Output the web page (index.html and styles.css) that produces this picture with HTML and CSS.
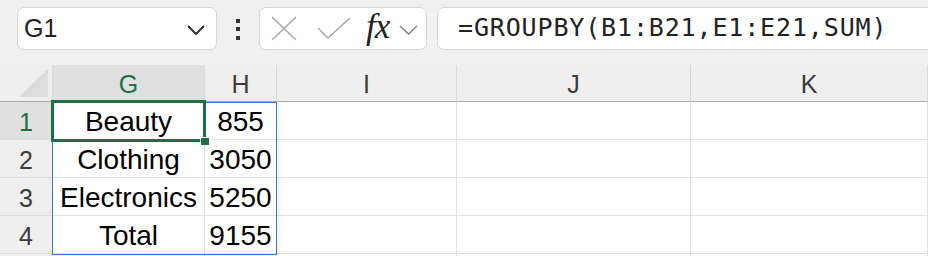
FILE: index.html
```html
<!doctype html>
<html>
<head>
<meta charset="utf-8">
<title>GROUPBY</title>
<link rel="stylesheet" href="styles.css">
</head>
<body>
	<div class="bar">
		<div class="namebox">
			<span class="ref">G1</span>
			<svg class="chev" width="18" height="10" viewBox="0 0 18 10"><polyline points="1,1 9,9 17,1" fill="none" stroke="#333" stroke-width="2"/></svg>
		</div>
		<div class="dots"><i></i><i></i><i></i></div>
		<div class="fxbox">
			<svg width="26" height="25" viewBox="0 0 26 25"><path d="M1 1 L25 24 M25 1 L1 24" stroke="#aaa" stroke-width="1.6" fill="none"/></svg>
			<svg width="34" height="23" viewBox="0 0 34 23"><polyline points="1,11 11,21 33,1" stroke="#aaa" stroke-width="1.6" fill="none"/></svg>
			<span class="fx">fx</span>
			<svg width="19" height="10" viewBox="0 0 19 10"><polyline points="1,1 9.5,9 18,1" stroke="#888" stroke-width="1.6" fill="none"/></svg>
		</div>
		<div class="formula">=GROUPBY(B1:B21,E1:E21,SUM)</div>
	</div>

	<div class="stack">
		<div class="sheet">
			<div class="corner"><span class="tri"></span></div>
			<div class="colhead on">G</div>
			<div class="colhead">H</div>
			<div class="colhead">I</div>
			<div class="colhead">J</div>
			<div class="colhead">K</div>

			<div class="rowhead on">1</div>
			<div class="cell">Beauty</div>
			<div class="cell">855</div>
			<div class="cell"></div>
			<div class="cell"></div>
			<div class="cell"></div>

			<div class="rowhead">2</div>
			<div class="cell">Clothing</div>
			<div class="cell">3050</div>
			<div class="cell"></div>
			<div class="cell"></div>
			<div class="cell"></div>

			<div class="rowhead">3</div>
			<div class="cell">Electronics</div>
			<div class="cell">5250</div>
			<div class="cell"></div>
			<div class="cell"></div>
			<div class="cell"></div>

			<div class="rowhead">4</div>
			<div class="cell">Total</div>
			<div class="cell">9155</div>
			<div class="cell"></div>
			<div class="cell"></div>
			<div class="cell"></div>

			<div class="rowhead"></div>
			<div class="cell"></div>
			<div class="cell"></div>
			<div class="cell"></div>
			<div class="cell"></div>
			<div class="cell"></div>
		</div>

		<!-- selection layer, same tracks as the sheet -->
		<div class="sheet layer">
			<div class="spill"></div>
			<div class="active"><span class="handle"></span></div>
		</div>
	</div>
</body>
</html>
```

FILE: styles.css
```css
*{
	margin: 0;
	padding: 0;
	box-sizing: border-box;
}
body{
	width: 928px;
	height: 256px;
	overflow: hidden;
	background: #f0f0f0;
	font-family: "Liberation Sans", Arial, sans-serif;
	color: #111;
}

/* toolbar */
.bar{
	display: flex;
	align-items: center;
	height: 65px;
	padding: 7px 0 15px 17px;
}
.namebox{
	width: 200px;
	height: 43px;
	background: #fff;
	border: 1px solid #d6d6d6;
	border-radius: 7px;
	display: flex;
	align-items: center;
	justify-content: space-between;
	padding: 0 11px 0 6px;
}
.ref{
	font-size: 25px;
	color: #222;
}
.chev{
	margin-top: 2px;
}
.dots{
	width: 42px;
	display: flex;
	flex-direction: column;
	align-items: center;
	gap: 4.5px;
	padding-top: 1px;
}
.dots i{
	width: 4px;
	height: 4px;
	background: #333;
}
.fxbox{
	width: 168px;
	height: 43px;
	background: #fff;
	border: 1px solid #d6d6d6;
	border-radius: 7px;
	display: flex;
	align-items: center;
	padding: 0 0 0 11px;
}
.fxbox svg:nth-child(2){
	margin-left: 20px;
}
.fx{
	font-family: "Liberation Serif", "DejaVu Serif", serif;
	font-style: italic;
	font-size: 35px;
	color: #222;
	margin-left: 15px;
	margin-top: -4px;
	letter-spacing: -1px;
}
.fxbox svg:last-child{
	margin-left: 10px;
	margin-top: 2px;
}
.formula{
	flex: 1;
	height: 43px;
	margin: 0 -12px 0 10px;
	background: #fff;
	border: 1px solid #d6d6d6;
	border-radius: 7px;
	display: flex;
	align-items: center;
	padding: 0 0 2px 20px;
	font-family: "DejaVu Sans Mono", "Liberation Mono", monospace;
	font-size: 25px;
	letter-spacing: 0.85px;
	color: #222;
}

/* sheet */
.stack{
	display: grid;
}
.sheet{
	grid-area: 1 / 1;
	display: grid;
	grid-template-columns: 53px 152px 72px 180px 234px 1fr;
	grid-template-rows: 37px repeat(5, 38px);
	background: #fff;
}
.corner{
	background: #efefef;
	border-bottom: 1px solid #ababab;
	border-right: 1px solid #dcdcdc;
	position: relative;
}
.tri{
	position: absolute;
	right: 4px;
	bottom: 4px;
	width: 0;
	height: 0;
	border-left: 29px solid transparent;
	border-bottom: 28px solid #dcdcdc;
}
.colhead{
	background: #efefef;
	border-bottom: 1px solid #ababab;
	border-right: 1px solid #d9d9d9;
	display: flex;
	align-items: center;
	justify-content: center;
	font-size: 25px;
	color: #3a3a3a;
	padding-top: 2px;
}
.rowhead{
	background: #efefef;
	border-bottom: 1px solid #dcdcdc;
	border-right: 1px solid #dcdcdc;
	display: flex;
	align-items: center;
	justify-content: center;
	font-size: 25px;
	color: #3a3a3a;
	padding-top: 3px;
}
.colhead.on,
.rowhead.on{
	background: #e0e0e0;
	color: #1e7145;
}
.cell{
	border-bottom: 1px solid #e1e1e1;
	border-right: 1px solid #e1e1e1;
	display: flex;
	align-items: center;
	justify-content: center;
	font-size: 28px;
	color: #000;
	white-space: nowrap;
	padding-top: 3px;
}

/* spill range and active cell */
.layer{
	background: none;
	pointer-events: none;
}
.spill{
	grid-area: 2 / 2 / 6 / 4;
	border: 1px solid #3c78d0;
	margin: 0 0 -1px -1px;
	box-shadow: 2px 1px 5px rgba(0,0,0,.08);
}
.active{
	grid-area: 2 / 2 / 3 / 3;
	border: 3px solid #1e7145;
	margin: -2px -1px -2px -2px;
	position: relative;
}
.handle{
	position: absolute;
	right: -6px;
	bottom: -6px;
	width: 9px;
	height: 8px;
	background: #1e7145;
	border-left: 1px solid #fff;
	border-top: 1px solid #fff;
}
```
